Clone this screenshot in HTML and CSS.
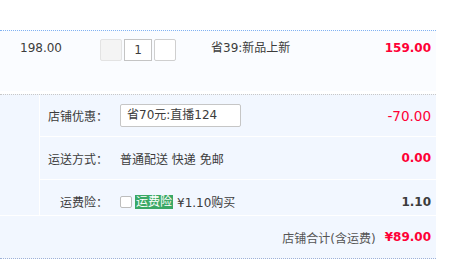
FILE: index.html
```html
<!DOCTYPE html>
<html lang="zh-CN">
<head>
  <meta charset="UTF-8" />
  <meta name="viewport" content="width=device-width, initial-scale=1.0"/>
  <title>确认订单</title>
  <link rel="stylesheet" href="styles.css">
</head>
<body>
  <div class="order">
    <div class="item">
      <div class="item-price">198.00</div>
      <div class="item-qty">
        <span class="qty-btn disabled"></span>
        <span class="qty-num">1</span>
        <span class="qty-btn"></span>
      </div>
      <div class="item-promo">省39:新品上新</div>
      <div class="item-sum">159.00</div>
    </div>

    <div class="shop">
      <div class="shop-main">
        <div class="shop-side"></div>
        <div class="shop-rows">
          <div class="row row-coupon">
            <span class="label">店铺优惠：</span>
            <span class="coupon">省70元:直播124</span>
            <span class="amount red">-70.00</span>
          </div>
          <div class="row row-ship">
            <span class="label">运送方式：</span>
            <span class="text">普通配送 快递 免邮</span>
            <span class="amount red bold">0.00</span>
          </div>
          <div class="row row-ins">
            <span class="label">运费险：</span>
            <span class="check"></span>
            <span class="tag">运费险</span>
            <span class="text">¥1.10购买</span>
            <span class="amount bold">1.10</span>
          </div>
        </div>
      </div>
      <div class="shop-total">
        <span class="total-label">店铺合计(含运费)</span>
        <span class="total-num">¥89.00</span>
      </div>
    </div>
  </div>
</body>
</html>
```

FILE: styles.css
```css
body {
  margin: 0;
  font-family: "DejaVu Sans", "Noto Sans CJK SC", sans-serif;
  font-size: 12px;
  color: #3c3c3c;
  background: #fff;
}
.order {
  width: 436px;
  margin-top: 30px;
}
.item {
  display: flex;
  height: 61px;
  padding-top: 8px;
  box-sizing: border-box;
  border-top: 1px dotted #80b2f2;
  background: #fafcff;
  margin-bottom: 3px;
  line-height: 18px;
}
.item-price {
  width: 80px;
  padding-left: 20px;
}
.item-qty {
  width: 111px;
  display: flex;
  gap: 2px;
  align-items: flex-start;
}
.qty-btn, .qty-num {
  display: block;
  height: 22px;
  box-sizing: border-box;
  border: 1px solid #cfcfcf;
  border-radius: 2px;
  background: #fff;
}
.qty-btn {
  width: 22px;
}
.qty-btn.disabled {
  background: #f4f4f4;
  border-color: #e3e3e3;
}
.qty-num {
  width: 28px;
  text-align: center;
  line-height: 20px;
  border-radius: 0;
  border-color: #c4c4c4;
}
.item-promo {
  flex: 1;
}
.item-sum {
  padding-right: 5px;
  color: #ff0036;
  font-weight: bold;
}
.shop {
  border-top: 1px dotted #c8c8c8;
  border-bottom: 1px dotted #9fb2d8;
  background: #f2f7ff;
}
.shop-main {
  display: flex;
  border-bottom: 1px solid #fff;
}
.shop-side {
  width: 39px;
  border-right: 1px solid #fff;
}
.shop-rows {
  flex: 1;
}
.row {
  display: flex;
  align-items: center;
  border-bottom: 1px solid #fff;
  padding-right: 5px;
}
.row-coupon {
  height: 41px;
}
.row-ship {
  height: 42px;
}
.row-ins {
  height: 35px;
  padding-top: 8px;
  box-sizing: border-box;
  border-bottom: none;
}
.label {
  width: 68px;
  margin-right: 12px;
  text-align: right;
}
.coupon {
  width: 121px;
  height: 23px;
  box-sizing: border-box;
  padding-left: 6px;
  line-height: 21px;
  border: 1px solid #c6c6c6;
  border-radius: 2px;
  background: #fff;
}
.amount {
  margin-left: auto;
}
.red {
  color: #ff0036;
}
.amount.red:not(.bold) {
  font-size: 13.5px;
}
.bold {
  font-weight: bold;
}
.check {
  width: 12px;
  height: 12px;
  box-sizing: border-box;
  border: 1px solid #bdbdbd;
  border-radius: 2px;
  background: #fff;
  margin-right: 3px;
}
.tag {
  background: #3aa866;
  color: #fff;
  line-height: 14px;
  padding: 0 1px;
  margin-right: 4px;
}
.shop-total {
  display: flex;
  justify-content: flex-end;
  align-items: center;
  height: 42px;
  padding-right: 5px;
}
.total-label {
  color: #555;
}
.total-num {
  margin-left: 9px;
  color: #ff0036;
  font-weight: bold;
}
```
